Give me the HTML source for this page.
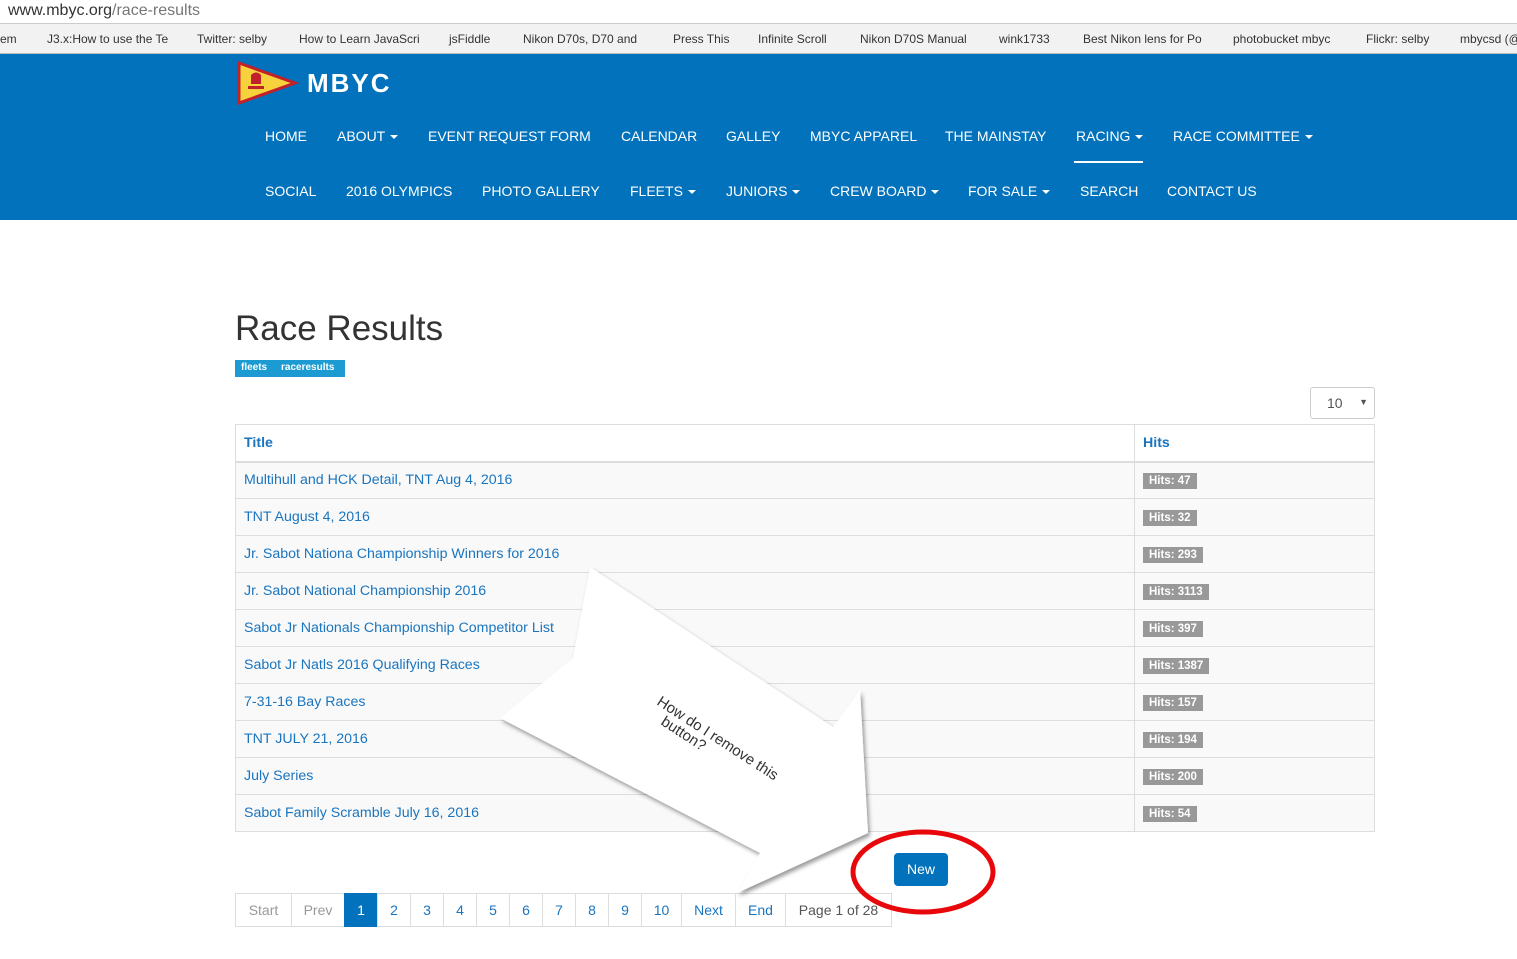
<!DOCTYPE html>
<html><head><style>
*{box-sizing:border-box;margin:0;padding:0}
body{width:1517px;height:959px;overflow:hidden;background:#fff;font-family:"Liberation Sans",Arial,sans-serif;position:relative}
.url{position:absolute;top:0;left:0;width:1517px;height:24px;border-bottom:1px solid #ccc;font-size:16px;color:#333;padding:2px 8px}
.url span{color:#777}
.bm{position:absolute;top:24px;left:0;width:1517px;height:30px;background:#f2f2f2;border-bottom:1px solid #bbb;font-size:12px;color:#333;white-space:nowrap}
.bm i{position:absolute;top:8px;font-style:normal}
.hdr{position:absolute;top:54px;left:0;width:1517px;height:166px;background:#0172bb}
.nav{position:absolute;color:#fff;font-size:14px;white-space:nowrap}
.nav b{font-weight:normal;position:absolute}
.car{display:inline-block;border-left:4px solid transparent;border-right:4px solid transparent;border-top:4px solid #fff;vertical-align:middle;margin-left:5px}
h1{position:absolute;left:235px;top:309px;font-size:35px;font-weight:normal;color:#333}
.tags{position:absolute;left:235px;top:360px;height:17px;width:110px;background:#1b9bd1;color:#fff;font-size:10px;font-weight:bold;padding:2px 6px}
.sel{position:absolute;left:1310px;top:387px;width:65px;height:32px;border:1px solid #ccc;border-radius:3px;font-size:14px;color:#555;padding:7px 16px}
table{position:absolute;left:235px;top:424px;width:1140px;border-collapse:collapse;font-size:14.2px}
td,th{border:1px solid #ddd;height:37px;padding:0 8px;text-align:left;color:#1a75bf;font-weight:normal}
th{font-weight:bold;border-bottom:2px solid #ddd;background:#fff}
tr.r td{background:#f9f9f9}
td.h{width:240px}
.b{background:#999;color:#fff;font-size:11.5px;font-weight:bold;padding:2px 6px}
.pg{position:absolute;top:893px;left:235px;height:34px;display:flex;font-size:14px}
.pg div{border:1px solid #ddd;margin-left:-1px;height:34px;display:flex;align-items:center;justify-content:center;color:#1a75bf}
.new{position:absolute;left:894px;top:853px;width:54px;height:33px;background:#0172bb;border-radius:4px;color:#fff;font-size:14px;text-align:center;line-height:33px}
</style></head><body>
<div class="url">www.mbyc.org<span>/race-results</span></div>
<div class="bm">
<i style="left:0">em</i><i style="left:47px">J3.x:How to use the Te</i><i style="left:197px">Twitter: selby</i><i style="left:299px">How to Learn JavaScri</i><i style="left:449px">jsFiddle</i><i style="left:523px">Nikon D70s, D70 and</i><i style="left:673px">Press This</i><i style="left:758px">Infinite Scroll</i><i style="left:860px">Nikon D70S Manual</i><i style="left:999px">wink1733</i><i style="left:1083px">Best Nikon lens for Po</i><i style="left:1233px">photobucket mbyc</i><i style="left:1366px">Flickr: selby</i><i style="left:1460px">mbycsd (@</i>
</div>
<div class="hdr">
<svg style="position:absolute;left:237px;top:7px" width="62" height="44"><polygon points="2,2 58,22 2,42" fill="#f7d23c" stroke="#c2202a" stroke-width="3"/><path d="M14,14 q5,-5 10,0 v9 h-10z M11,25 h16 v3 h-16z" fill="#c2202a"/></svg>
<div style="position:absolute;left:307px;top:14px;color:#fff;font-size:26px;font-weight:bold;letter-spacing:2px">MBYC</div>
<div class="nav" style="top:74px;left:0;width:1517px">
<b style="left:265px">HOME</b><b style="left:337px">ABOUT<span class="car"></span></b><b style="left:428px">EVENT REQUEST FORM</b><b style="left:621px">CALENDAR</b><b style="left:726px">GALLEY</b><b style="left:810px">MBYC APPAREL</b><b style="left:945px">THE MAINSTAY</b><b style="left:1076px">RACING<span class="car"></span></b><b style="left:1173px">RACE COMMITTEE<span class="car"></span></b>
</div>
<div style="position:absolute;left:1074px;top:107px;width:69px;height:2px;background:#fff"></div>
<div class="nav" style="top:129px;left:0;width:1517px">
<b style="left:265px">SOCIAL</b><b style="left:346px">2016 OLYMPICS</b><b style="left:482px">PHOTO GALLERY</b><b style="left:630px">FLEETS<span class="car"></span></b><b style="left:726px">JUNIORS<span class="car"></span></b><b style="left:830px">CREW BOARD<span class="car"></span></b><b style="left:968px">FOR SALE<span class="car"></span></b><b style="left:1080px">SEARCH</b><b style="left:1167px">CONTACT US</b>
</div>
</div>
<h1>Race Results</h1>
<div class="tags">fleets &nbsp;&nbsp;&nbsp; raceresults</div>
<div class="sel">10<span style="position:absolute;right:6px;top:9px;font-size:9px">▼</span></div>
<table>
<tr><th>Title</th><th>Hits</th></tr>
<tr class="r"><td>Multihull and HCK Detail, TNT Aug 4, 2016</td><td class="h"><span class="b">Hits: 47</span></td></tr>
<tr class="r"><td>TNT August 4, 2016</td><td class="h"><span class="b">Hits: 32</span></td></tr>
<tr class="r"><td>Jr. Sabot Nationa Championship Winners for 2016</td><td class="h"><span class="b">Hits: 293</span></td></tr>
<tr class="r"><td>Jr. Sabot National Championship 2016</td><td class="h"><span class="b">Hits: 3113</span></td></tr>
<tr class="r"><td>Sabot Jr Nationals Championship Competitor List</td><td class="h"><span class="b">Hits: 397</span></td></tr>
<tr class="r"><td>Sabot Jr Natls 2016 Qualifying Races</td><td class="h"><span class="b">Hits: 1387</span></td></tr>
<tr class="r"><td>7-31-16 Bay Races</td><td class="h"><span class="b">Hits: 157</span></td></tr>
<tr class="r"><td>TNT JULY 21, 2016</td><td class="h"><span class="b">Hits: 194</span></td></tr>
<tr class="r"><td>July Series</td><td class="h"><span class="b">Hits: 200</span></td></tr>
<tr class="r"><td>Sabot Family Scramble July 16, 2016</td><td class="h"><span class="b">Hits: 54</span></td></tr>
</table>
<div class="pg">
<div style="width:57px;color:#999;margin-left:0">Start</div><div style="width:54px;color:#999">Prev</div><div style="width:34px;background:#0172bb;color:#fff;border-color:#0172bb">1</div><div style="width:34px">2</div><div style="width:34px">3</div><div style="width:34px">4</div><div style="width:34px">5</div><div style="width:34px">6</div><div style="width:34px">7</div><div style="width:34px">8</div><div style="width:34px">9</div><div style="width:41px">10</div><div style="width:55px">Next</div><div style="width:51px">End</div><div style="width:107px;color:#555">Page 1 of 28</div>
</div>
<svg style="position:absolute;left:0;top:0" width="1517" height="959">
<defs><filter id="s"><feDropShadow dx="2" dy="3" stdDeviation="2" flood-opacity="0.4"/></filter></defs>
<polygon points="590,567 833,727 860,690 868,833 737,893 760,853 500,718 573,658" fill="#fff" filter="url(#s)"/>
<text x="0" y="0" transform="translate(656,704) rotate(33)" font-size="15" fill="#333" font-family="Liberation Sans,sans-serif">How do I remove this</text>
<text x="0" y="0" transform="translate(660,724) rotate(33)" font-size="15" fill="#333" font-family="Liberation Sans,sans-serif">button?</text>
</svg>
<div class="new">New</div>
<svg style="position:absolute;left:0;top:0" width="1517" height="959"><ellipse cx="923" cy="872" rx="70" ry="40" fill="none" stroke="#e8080c" stroke-width="5"/></svg>
</body></html>
